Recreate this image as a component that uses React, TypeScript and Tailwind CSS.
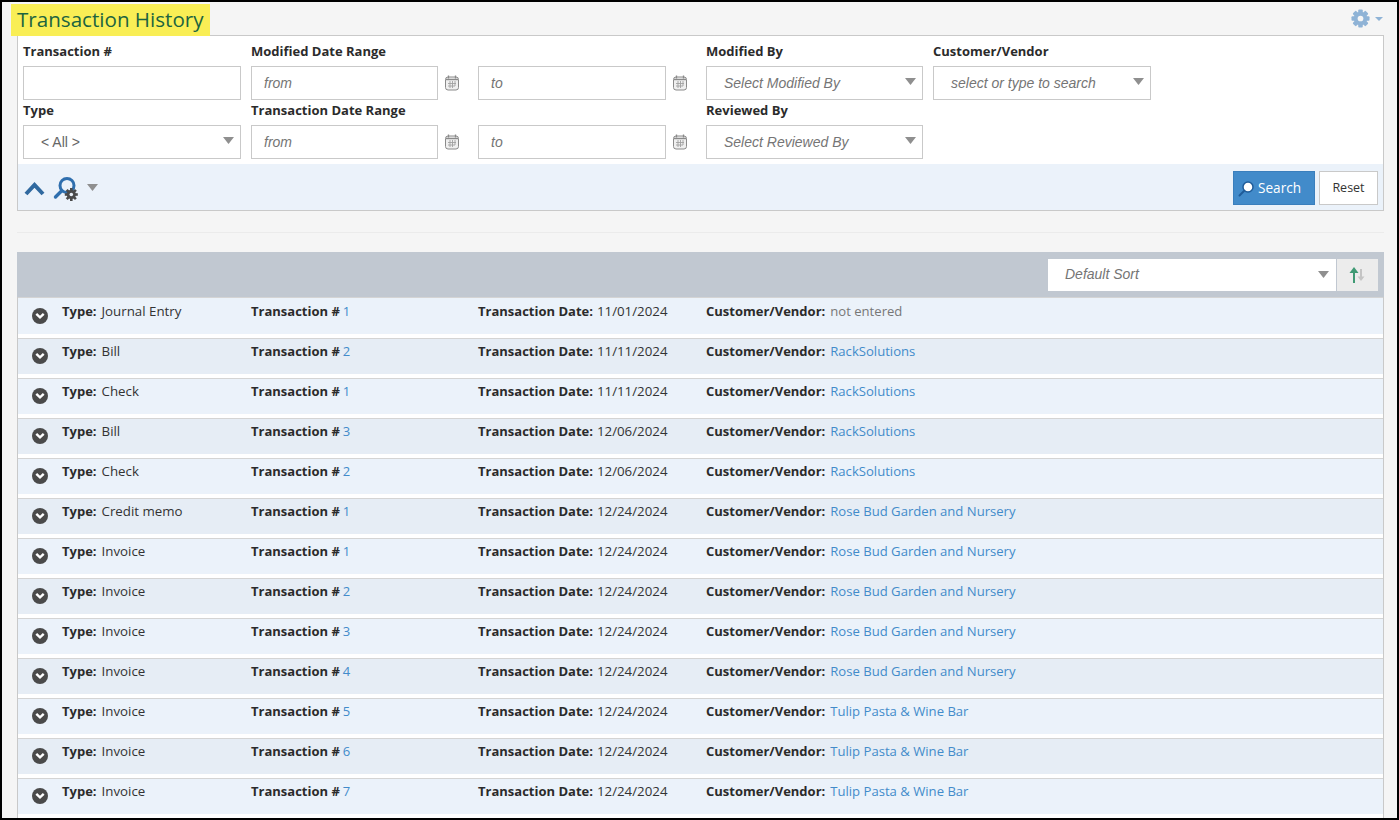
const rows = [
  { type: "Journal Entry", num: "1", date: "11/01/2024", who: "not entered" },
  { type: "Bill", num: "2", date: "11/11/2024", who: "RackSolutions" },
  { type: "Check", num: "1", date: "11/11/2024", who: "RackSolutions" },
  { type: "Bill", num: "3", date: "12/06/2024", who: "RackSolutions" },
  { type: "Check", num: "2", date: "12/06/2024", who: "RackSolutions" },
  { type: "Credit memo", num: "1", date: "12/24/2024", who: "Rose Bud Garden and Nursery" },
  { type: "Invoice", num: "1", date: "12/24/2024", who: "Rose Bud Garden and Nursery" },
  { type: "Invoice", num: "2", date: "12/24/2024", who: "Rose Bud Garden and Nursery" },
  { type: "Invoice", num: "3", date: "12/24/2024", who: "Rose Bud Garden and Nursery" },
  { type: "Invoice", num: "4", date: "12/24/2024", who: "Rose Bud Garden and Nursery" },
  { type: "Invoice", num: "5", date: "12/24/2024", who: "Tulip Pasta & Wine Bar" },
  { type: "Invoice", num: "6", date: "12/24/2024", who: "Tulip Pasta & Wine Bar" },
  { type: "Invoice", num: "7", date: "12/24/2024", who: "Tulip Pasta & Wine Bar" },
];

function Caret({ className = "" }: { className?: string }) {
  return (
    <svg width="11" height="7" viewBox="0 0 11 7" className={className}>
      <path d="M0 0h11L5.500 7z" fill="#8f8f8f" />
    </svg>
  );
}

function CalendarIcon() {
  return (
    <svg width="14" height="16" viewBox="0 0 14 16" className="shrink-0">
      <rect x="0.5" y="2" width="13" height="13" rx="2.500" fill="#efefef" stroke="#8a8a8a" />
      <path d="M1 4.500h12" stroke="#8a8a8a" strokeWidth="1.400" />
      <path d="M3.500 0.500v3M10.500 0.500v3" stroke="#8a8a8a" strokeWidth="1.300" />
      <path d="M5 6v7M7.500 6v7M10 6v5M3 8.500h8M3 11h7" stroke="#a0a0a0" strokeWidth="0.900" />
    </svg>
  );
}

function TextBox({ value, width, caret, pad = "pl-[17px]", plain }: { value?: string; width: string; caret?: boolean; pad?: string; plain?: boolean }) {
  return (
    <div className={`${width} ${pad} ${plain ? "text-[#666]" : "italic text-[#757575]"} flex h-[34px] items-center justify-between border border-[#c9c9c9] bg-white pr-[6px] font-['Liberation_Sans',sans-serif] text-[14px]`}>
      <span>{value}</span>
      {caret && <Caret className="mb-[3px]" />}
    </div>
  );
}

function DateField({ value, width }: { value: string; width: string }) {
  return (
    <div className="flex items-center">
      <TextBox value={value} width={width} pad="pl-[12px]" />
      <span className="ml-[7px]"><CalendarIcon /></span>
    </div>
  );
}

function Label({ children }: { children: string }) {
  return <div className="h-[25px] text-[13px] leading-[20px] font-bold text-[#2b2b2b]">{children}</div>;
}

function GearIcon() {
  return (
    <svg width="19" height="19" viewBox="0 0 20 20">
      {[0, 45, 90, 135].map((a) => (
        <rect key={a} x="7.600" y="0.500" width="4.800" height="19" rx="1" fill="#8fb3d6" transform={`rotate(${a} 10 10)`} />
      ))}
      <circle cx="10" cy="10" r="7" fill="#8fb3d6" />
      <circle cx="10" cy="10" r="3" fill="#f5f5f5" />
    </svg>
  );
}

function GearMini() {
  return (
    <>
      {[0, 45, 90, 135].map((a) => (
        <rect key={a} x="5" y="0" width="2.600" height="13" fill="#4a4a4a" transform={`rotate(${a} 6.300 6.500)`} />
      ))}
      <circle cx="6.300" cy="6.500" r="4.600" fill="#4a4a4a" />
      <circle cx="6.300" cy="6.500" r="1.800" fill="#ebf2fa" />
    </>
  );
}

export default function App() {
  return (
    <div className="h-[820px] w-[1399px] overflow-hidden border-2 border-black bg-[#f5f5f5] font-['Open_Sans',sans-serif] text-[13px] text-[#333]">
      <div className="flex h-[33px] items-start justify-between pl-[9px] pr-[14px] pt-[2px]">
        <h1 className="flex h-[32px] w-[199px] items-center bg-[#f9ee55] pb-[2px] pl-[6px] text-[20.6px] text-[#1c6440]">Transaction History</h1>
        <div className="flex items-center gap-[5px] pt-[5px]">
          <GearIcon />
          <svg width="8" height="4" viewBox="0 0 8 4"><path d="M0 0h8L4 4z" fill="#8fb3d6" /></svg>
        </div>
      </div>

      {/* Search panel */}
      <div className="ml-[15px] mr-[13px] h-[176px] border border-[#c9c9c9] bg-white">
        <div className="h-[128px] pl-[5px] pt-[5px]">
          <div className="grid grid-cols-[228px_227px_228px_227px_auto]">
            <div>
              <Label>Transaction #</Label>
              <TextBox width="w-[218px]" />
            </div>
            <div className="col-span-2">
              <Label>Modified Date Range</Label>
              <div className="grid grid-cols-[227px_228px]">
                <DateField value="from" width="w-[187px]" />
                <DateField value="to" width="w-[188px]" />
              </div>
            </div>
            <div>
              <Label>Modified By</Label>
              <TextBox value="Select Modified By" width="w-[217px]" caret />
            </div>
            <div>
              <Label>Customer/Vendor</Label>
              <TextBox value="select or type to search" width="w-[218px]" caret />
            </div>
            <div>
              <Label>Type</Label>
              <TextBox value="< All >" width="w-[218px]" caret plain />
            </div>
            <div className="col-span-2">
              <Label>Transaction Date Range</Label>
              <div className="grid grid-cols-[227px_228px]">
                <DateField value="from" width="w-[187px]" />
                <DateField value="to" width="w-[188px]" />
              </div>
            </div>
            <div>
              <Label>Reviewed By</Label>
              <TextBox value="Select Reviewed By" width="w-[217px]" caret />
            </div>
          </div>
        </div>
        <div className="flex h-[46px] items-center justify-between bg-[#ebf2fa] pl-[6px] pr-[5px]">
          <div className="flex items-center pt-[1px]">
            <svg width="21" height="16" viewBox="0 0 21 16">
              <path d="M2 14 10.500 5 19 14" fill="none" stroke="#30699f" strokeWidth="4" />
            </svg>
            <svg width="28" height="28" viewBox="0 0 28 28" className="ml-[8px]">
              <circle cx="14" cy="11.500" r="7" fill="#ebf2fa" stroke="#2f6fae" strokeWidth="3" />
              <path d="M8.500 17 2.500 23" stroke="#2f6fae" strokeWidth="3.400" strokeLinecap="round" />
              <g transform="translate(12 14)"><GearMini /></g>
            </svg>
            <Caret className="ml-[6px] mt-[-1px]" />
          </div>
          <div className="flex items-center gap-[4px] pt-[2px]">
            <button className="flex h-[34px] w-[82px] items-center gap-[3px] border border-[#3a7fbd] bg-[#428bca] pl-[4px] text-[13.6px] text-white">
              <svg width="17" height="17" viewBox="0 0 17 17">
                <circle cx="10" cy="7" r="5" fill="#fff" stroke="#1f5c99" strokeWidth="1.500" />
                <path d="M6 11 1.500 15.500" stroke="#1f5c99" strokeWidth="2" strokeLinecap="round" />
              </svg>
              Search
            </button>
            <button className="h-[34px] w-[59px] border border-[#c9c9c9] bg-white text-[12.500px] text-[#333]">Reset</button>
          </div>
        </div>
      </div>

      <div className="ml-[15px] mr-[13px] mt-[21px] h-px bg-[#ebebeb]" />

      {/* Results */}
      <div className="ml-[15px] mr-[13px] mt-[19px] border-x border-[#c9c9c9]">
        <div className="-mx-px flex h-[45px] items-start justify-end bg-[#c1c8d1] pr-[6px] pt-[7px]">
          <div className="flex h-[32px] w-[288px] items-center justify-between bg-white pb-[2px] pl-[17px] pr-[7px] font-['Liberation_Sans',sans-serif] text-[14px] italic text-[#757575]">
            <span>Default Sort</span>
            <Caret />
          </div>
          <div className="ml-px flex h-[32px] w-[41px] items-center justify-center bg-[#ececec] pr-[2px]">
            <svg width="18" height="18" viewBox="0 0 18 18">
              <path d="M6 17V4" stroke="#3f9a74" strokeWidth="2" />
              <path d="M1.500 7 6 1l4.500 6z" fill="#3f9a74" />
              <path d="M13 3v9" stroke="#c4c4c4" strokeWidth="2" />
              <path d="M9.500 10.500h7L13 15z" fill="#c4c4c4" />
            </svg>
          </div>
        </div>
        {rows.map((r, i) => (
          <div key={i} className="border-t border-[#d4d4d4] bg-white pb-[4px] first:border-t-0">
            <div className={`grid grid-cols-[233px_227px_228px_auto] ${i === 0 ? "h-[36px] pt-[4px]" : "h-[35px] pt-[3px]"} ${i % 2 === 1 ? "bg-[#e6edf5]" : "bg-[#ebf2fa]"}`}>
              <div className="relative pl-[44px] leading-[18px]">
                <span className="absolute left-[14px] top-[6px] flex h-[16px] w-[16px] items-center justify-center rounded-full bg-[#4a4a4a]">
                  <svg width="10" height="8" viewBox="0 0 10 8">
                    <path d="M1.300 1.800 5 5.400 8.700 1.800" fill="none" stroke="#fff" strokeWidth="2.400" />
                  </svg>
                </span>
                <b className="text-[#2b2b2b]">Type:</b>
                <span className="ml-[5px] text-[13.300px]">{r.type}</span>
              </div>
              <div className="leading-[18px]">
                <b className="text-[#2b2b2b]">Transaction #</b>
                <span className="ml-[3px] text-[#428bca]">{r.num}</span>
              </div>
              <div className="leading-[18px]">
                <b className="text-[#2b2b2b]">Transaction Date:</b>
                <span className="ml-[4px] text-[13.300px]">{r.date}</span>
              </div>
              <div className="leading-[18px]">
                <b className="text-[#2b2b2b]">Customer/Vendor:</b>
                <span className={`ml-[5px] text-[13.100px] ${r.who === "not entered" ? "text-[#777]" : "text-[#428bca]"}`}>{r.who}</span>
              </div>
            </div>
          </div>
        ))}
      </div>
    </div>
  );
}
